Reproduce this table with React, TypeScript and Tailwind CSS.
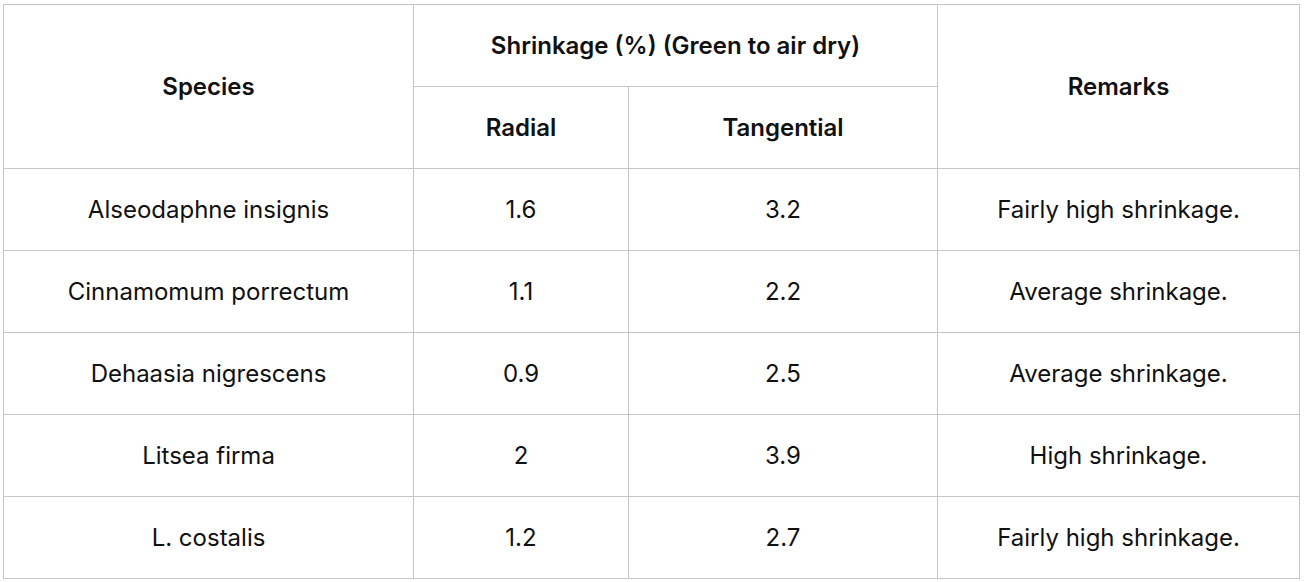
import React from "react";

const rows = [
  ["Alseodaphne insignis", "1.6", "3.2", "Fairly high shrinkage."],
  ["Cinnamomum porrectum", "1.1", "2.2", "Average shrinkage."],
  ["Dehaasia nigrescens", "0.9", "2.5", "Average shrinkage."],
  ["Litsea firma", "2", "3.9", "High shrinkage."],
  ["L. costalis", "1.2", "2.7", "Fairly high shrinkage."],
];

export default function App() {
  return (
    <div className="bg-white w-[1304px] h-[582px] pt-[4px] pl-[3px]" style={{ fontFamily: "Inter, 'Noto Sans', sans-serif" }}>
      <table className="table-fixed border-collapse w-[1296px] text-[24px] leading-[32px] text-[#111111]">
        <colgroup>
          <col className="w-[410px]" />
          <col className="w-[215px]" />
          <col className="w-[309px]" />
          <col className="w-[362px]" />
        </colgroup>
        <thead>
          <tr className="h-[82px]">
            <th rowSpan={2} className="border border-[#c6c6c6] font-semibold text-center">Species</th>
            <th colSpan={2} className="border border-[#c6c6c6] font-semibold text-center">Shrinkage (%) (Green to air dry)</th>
            <th rowSpan={2} className="border border-[#c6c6c6] font-semibold text-center">Remarks</th>
          </tr>
          <tr className="h-[82px]">
            <th className="border border-[#c6c6c6] font-semibold text-center">Radial</th>
            <th className="border border-[#c6c6c6] font-semibold text-center">Tangential</th>
          </tr>
        </thead>
        <tbody>
          {rows.map((r) => (
            <tr key={r[0]} className="h-[82px]">
              {r.map((c, i) => (
                <td key={i} className="border border-[#c6c6c6] text-center font-normal">{c}</td>
              ))}
            </tr>
          ))}
        </tbody>
      </table>
    </div>
  );
}
